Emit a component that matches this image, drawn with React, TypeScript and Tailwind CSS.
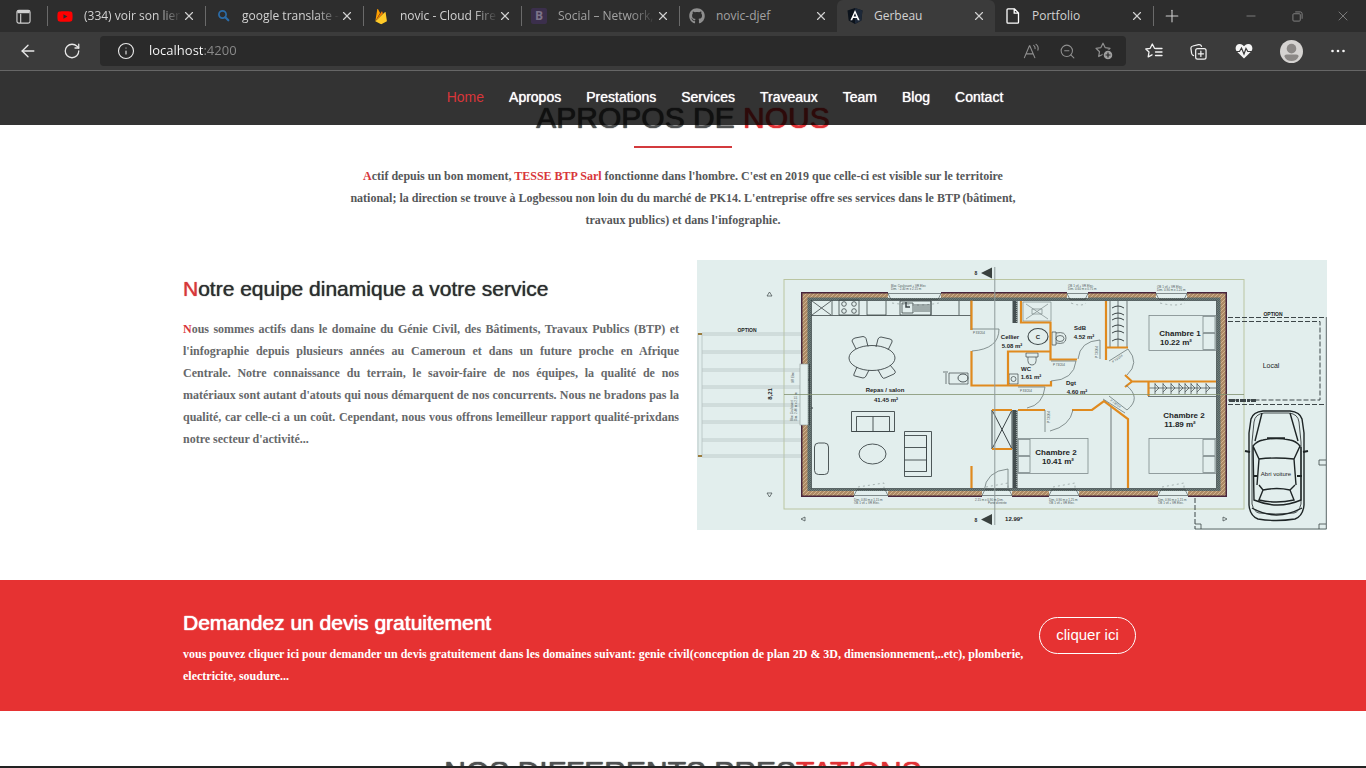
import type { ReactNode } from "react";
import { X, Plus, ArrowLeft, RotateCw, Info, ZoomOut, Minus } from "lucide-react";
import { FaGithub, FaYoutube } from "react-icons/fa";

const chromeFont = "font-['Open_Sans','Noto_Sans',sans-serif]";
const sansFont = "font-['Liberation_Sans',Arial,sans-serif]";
const serifFont = "font-['Liberation_Serif',serif]";

function FirebaseIcon() {
  return (
    <svg viewBox="0 0 16 18" className="h-[17px] w-4">
      <path d="M2 14 4 1.5c.1-.5.7-.6.9-.2L7 5.200z" fill="#ffa000" />
      <path d="M2 14 8.500 4c.2-.4.7-.4.9 0L10 6z" fill="#f57c00" />
      <path d="m2 14 10-9.500c.4-.3.800-.1.900.300L14.300 14l-5.500 3c-.4.2-.8.2-1.200 0z" fill="#ffca28" />
    </svg>
  );
}

function AngularIcon() {
  return (
    <svg viewBox="0 0 16 16" className="size-4">
      <path d="M8 0 15.500 2.600 14.300 12.500 8 16 1.700 12.500.5 2.600z" fill="#0c131c" />
      <path d="M8 0 15.500 2.600 14.300 12.500 8 16z" fill="#1d2838" />
      <path d="M8 2 3.400 12.300h1.800l.9-2.300h3.800l.9 2.300h1.800zm0 3.300L9.300 8.500H6.700z" fill="#fff" />
    </svg>
  );
}

function PageIcon() {
  return (
    <svg viewBox="0 0 14 16" className="h-4 w-[14px]" fill="none" stroke="#fff" strokeWidth="1.3">
      <path d="M1 1.800c0-.6.4-1 1-1h6.500L12.500 5v9.200c0 .6-.4 1-1 1H2c-.6 0-1-.4-1-1zM8.200 1v4.200h4.200" />
    </svg>
  );
}

function SearchIcon() {
  return (
    <svg viewBox="0 0 16 16" className="size-4" fill="none" stroke="#2b6ca8" strokeLinecap="round">
      <circle cx="7.500" cy="6.500" r="3.600" strokeWidth="1.700" />
      <path d="m10.300 9.300 3 3" strokeWidth="2.200" />
    </svg>
  );
}

type Tab = { title: string; icon: ReactNode; active?: boolean; bar?: boolean; dim?: boolean; fade?: boolean };

const tabs: Tab[] = [
  { title: "(334) voir son lier", icon: <FaYoutube className="size-[17px] text-[#f00]" />, bar: true, fade: true },
  { title: "google translate -", icon: <SearchIcon />, bar: true, fade: true },
  { title: "novic - Cloud Fire", icon: <FirebaseIcon />, bar: true, fade: true },
  {
    title: "Social – Network,",
    icon: <span className="flex size-4 items-center justify-center rounded-xs bg-[#3b2f4c] text-xs font-bold text-[#7d7489]">B</span>,
    bar: true,
    dim: true,
    fade: true,
  },
  { title: "novic-djef", icon: <FaGithub className="size-4 text-[#8f8f8f]" />, bar: true, dim: true },
  { title: "Gerbeau", icon: <AngularIcon />, active: true },
  { title: "Portfolio", icon: <PageIcon /> },
];

function TabStrip() {
  return (
    <div className="flex h-8 bg-[#2d2d2d] text-[#cfcfcf]">
      <button aria-label="Tab actions" className="flex w-[47px] items-center justify-center">
        <svg viewBox="0 0 16 16" className="size-[15px]" fill="none" stroke="#d0d0d0" strokeWidth="1.200">
          <rect x="1" y="1.500" width="14" height="13.500" rx="2" />
          <path d="M5 5v10" />
          <path d="M1.500 3h13" strokeWidth="3" />
        </svg>
      </button>
      {tabs.map((t) => (
        <div
          key={t.title}
          className={`relative flex w-[158px] shrink items-center pr-[9px] pl-[10px] ${t.active ? "rounded-t-md bg-[#3b3b3b]" : ""}`}
        >
          {t.bar && <span className="absolute top-[6px] left-0 h-5 w-px bg-[#6a6a6a]" />}
          <span className="flex w-4 shrink-0 justify-center">{t.icon}</span>
          <span
            className={`ml-[11px] min-w-0 flex-1 text-xs whitespace-nowrap ${t.fade ? "[mask-image:linear-gradient(to_right,black_75%,transparent)]" : ""} ${t.dim ? "text-[#a2a2a2]" : "text-[#d2d2d2]"}`}
          >
            {t.title}
          </span>
          <button aria-label={`Close ${t.title}`} className="shrink-0">
            <X className="size-[14px]" strokeWidth={2} />
          </button>
        </div>
      ))}
      <button aria-label="New tab" className="flex items-center">
        <span className="h-5 w-px bg-[#6a6a6a]" />
        <Plus className="ml-2 size-5" strokeWidth={1.300} />
      </button>
      <div className="ml-auto flex text-[#858585]">
        <button aria-label="Minimize" className="flex w-[46px] items-center justify-center">
          <Minus className="size-[14px]" strokeWidth={1.500} />
        </button>
        <button aria-label="Restore" className="flex w-[46px] items-center justify-center">
          <svg viewBox="0 0 12 12" className="size-[11px]" fill="none" stroke="currentColor">
            <rect x="1" y="3" width="8" height="8" rx="1" />
            <path d="M3.500 1H9q2 0 2 2v5.500" />
          </svg>
        </button>
        <button aria-label="Close window" className="flex w-[46px] items-center justify-center">
          <X className="size-4" strokeWidth={1.300} />
        </button>
      </div>
    </div>
  );
}

const starPath = "M8 1.200 10.100 5.600l4.900.7-3.500 3.400.8 4.800L8 12.200l-4.300 2.300.8-4.800L1 6.300l4.900-.7z";

function Toolbar() {
  return (
    <div className="flex h-[39px] items-center border-b border-[#666] bg-[#3b3b3b] text-[#e8e8e8]">
      <div className="flex w-[100px] shrink-0 items-center gap-[25px] pl-[18px]">
        <button aria-label="Back">
          <ArrowLeft className="size-5" strokeWidth={1.600} />
        </button>
        <button aria-label="Refresh">
          <RotateCw className="size-[18px]" strokeWidth={1.700} />
        </button>
      </div>
      <div className="flex h-[30px] min-w-0 flex-1 items-center rounded-sm bg-[#2a2a2a] pr-[13px] pl-[17px]">
        <Info className="size-[18px]" strokeWidth={1.500} />
        <input
          aria-label="Address"
          defaultValue="localhost:4200"
          className="ml-[14px] min-w-0 flex-1 bg-[linear-gradient(to_right,white_54px,#8b8b8b_54px)] bg-clip-text text-[13px] text-transparent outline-none"
        />
        <div className="flex items-center gap-[19px] text-[#8f8f8f]">
          <button aria-label="Read aloud">
            <svg viewBox="0 0 18 18" className="size-[17px]" fill="none" stroke="currentColor" strokeWidth="1.200" strokeLinecap="round">
              <path d="M1.500 15.500 6.800 3h.4l5.300 12.500M3.500 11.500h7M11.300 2.500c1.200.8 1.700 2 1.500 3.500M13.800 1.500c2 1.500 2.700 3.500 2 6" />
            </svg>
          </button>
          <button aria-label="Zoom">
            <ZoomOut className="size-[17px]" strokeWidth={1.500} />
          </button>
          <button aria-label="Add to favourites">
            <svg viewBox="0 0 18 18" className="size-[18px]" fill="none" stroke="currentColor" strokeWidth="1.200" strokeLinejoin="round">
              <path d={starPath} />
              <circle cx="13" cy="13" r="4.900" fill="#a0a0a0" stroke="#2a2a2a" />
              <path d="M13 10.500v5M10.500 13h5" stroke="#2a2a2a" />
            </svg>
          </button>
        </div>
      </div>
      <div className="flex w-60 shrink-0 items-center justify-between pr-5 pl-[19px]">
        <button aria-label="Favourites">
          <svg viewBox="0 0 18 16" className="h-4 w-[18px]" fill="none" stroke="#f2f2f2" strokeWidth="1.300" strokeLinejoin="round" strokeLinecap="round">
            <path d="M9.500 5.300 7.300 1 5.200 5.300.8 6l3.200 3-.8 4.800 3.800-2M10.500 5.500H17M10.500 9H17M10.500 12.500H17" />
          </svg>
        </button>
        <button aria-label="Collections">
          <svg viewBox="0 0 18 18" className="size-[17px]" fill="none" stroke="#f2f2f2" strokeWidth="1.300" strokeLinecap="round">
            <rect x="6" y="6" width="11" height="11" rx="2" />
            <path d="M11.500 8.700v5.600M8.700 11.500h5.600M3.800 13.300C2.500 13 2 12 1.700 11L1 6c-.2-1.500.5-2.500 2-2.800l6-1.500c1.500-.3 2.700.3 3.200 1.800" />
          </svg>
        </button>
        <button aria-label="Performance">
          <svg viewBox="0 0 18 16" className="h-4 w-[18px]">
            <path d="M9 15.500 1.800 8.500C-.5 6 .5 1 4.800 1 6.800 1 8 2 9 3.300 10 2 11.200 1 13.200 1c4.300 0 5.300 5 3 7.500z" fill="#f5f5f5" />
            <path d="M0 8.500h4.500L6.500 5 9 11l2-5.500 1.800 3H18" fill="none" stroke="#3b3b3b" strokeWidth="1.200" />
          </svg>
        </button>
        <button aria-label="Profile">
          <svg viewBox="0 0 24 24" className="size-[23px]">
            <circle cx="12" cy="12" r="12" fill="#d5d3d1" />
            <circle cx="12" cy="9" r="5" fill="#8b8886" />
            <path d="M4.500 17q0-2 2.500-2h10q2.500 0 2.500 2c-1.500 3.500-4 5-7.500 5s-6-1.500-7.500-5z" fill="#8b8886" />
          </svg>
        </button>
        <button aria-label="More">
          <svg viewBox="0 0 16 4" className="h-1 w-4" fill="#f5f5f5">
            <circle cx="2.500" cy="2" r="1.300" />
            <circle cx="8" cy="2" r="1.300" />
            <circle cx="13.500" cy="2" r="1.300" />
          </svg>
        </button>
      </div>
    </div>
  );
}

const links = ["Home", "Apropos", "Prestations", "Services", "Traveaux", "Team", "Blog", "Contact"];

function SiteNav() {
  return (
    <nav className={`absolute inset-x-0 top-0 flex h-[54px] items-center justify-center gap-[25px] bg-black/80 pb-[2px] pl-[84px] text-sm ${sansFont}`}>
      {links.map((l, i) => (
        <a key={l} href={`#${l.toLowerCase()}`} className={i === 0 ? "text-[#d8363a]" : "text-white [text-shadow:0_0_1px_white]"}>
          {l}
        </a>
      ))}
    </nav>
  );
}

const BG = "#e2eeed";
const INK = "#3d4648";
const ORANGE = "#e08a1e";

/* Plan coordinates: x 697–1327, y 260–530 */
function Bed({ x, y, right, w = 67 }: { x: number; y: number; right?: boolean; w?: number }) {
  const px = right ? x + w - 13 : x;
  return (
    <g fill="none" stroke="#7d898a" strokeWidth="0.800">
      <rect x={x} y={y} width={w} height="35" />
      <rect x={px} y={y + 1} width="12" height="16" />
      <rect x={px} y={y + 18} width="12" height="16" />
    </g>
  );
}

function FloorPlan() {
  const topWindows = [[888, 53], [1067, 21], [1156, 31]];
  const bottomWindows = [[854, 34], [982, 30], [1049, 30], [1158, 30]];
  return (
    <svg viewBox="697 260 630 270" className="block w-full" role="img" aria-label="Plan de maison" fontFamily="Liberation Sans" fill="none">
      <defs>
        <pattern id="brick" width="4" height="4" patternUnits="userSpaceOnUse">
          <rect width="4" height="4" fill="#ad8a66" />
          <path d="M0 4 4 0" stroke="#d0b48e" strokeWidth="1" />
        </pattern>
        <pattern id="hatch" width="2" height="2" patternUnits="userSpaceOnUse">
          <rect width="2" height="2" fill="#53615f" />
          <path d="M0 2 2 0" stroke="#8a9796" strokeWidth="0.500" />
        </pattern>
      </defs>
      <rect x="697" y="260" width="630" height="270" fill={BG} />
      <rect x="784" y="279.500" width="460" height="229.500" stroke="#bac5a2" />

      {/* pergola */}
      <g stroke="#b6c1c1" strokeWidth="0.800">
        {[333, 351, 369, 386, 404, 421, 439, 455].map((y) => (
          <path key={y} d={`M702 ${y}H801M702 ${y + 2}H801`} />
        ))}
        <path d="M698 333V457M702 333V457" />
      </g>
      <path d="M698 334h4M698 456h4" stroke="#9a7b3d" strokeWidth="2" />

      {/* outer walls */}
      <rect x="801" y="292" width="426" height="205" fill="#47253c" />
      <rect x="802.500" y="293.500" width="423" height="202" fill="url(#brick)" />
      <rect x="807.500" y="297.500" width="413" height="193.500" fill="url(#hatch)" />
      <rect x="811.500" y="300.500" width="405" height="188" fill={BG} stroke="#2d3637" strokeWidth="0.600" />
      {topWindows.map(([x, w]) => (
        <g key={x}>
          <rect x={x} y="291" width={w} height="7" fill={BG} />
          <path d={`M${x} 293.500h${w}l-3 6h${6 - w}z`} stroke={INK} strokeWidth="0.600" />
          <path d={`M${x + 4} 303q${w / 2} 4 ${w - 6} 0`} stroke="#7d898a" strokeWidth="0.600" strokeDasharray="2 3" />
        </g>
      ))}
      {bottomWindows.map(([x, w]) => (
        <g key={x}>
          <rect x={x} y="491" width={w} height="7" fill={BG} />
          <path d={`M${x} 495.500h${w}l-3-6h${6 - w}z`} stroke={INK} strokeWidth="0.600" />
          <path d={`M${x + 4} 487l${w - 8}-4v5`} stroke="#7d898a" strokeWidth="0.600" strokeDasharray="2 3" />
        </g>
      ))}
      <rect x="800" y="364" width="8" height="61" fill={BG} stroke="#8a9696" strokeWidth="0.600" />
      <path d="M809.500 364V425M808 380h2M811 408h2" stroke={INK} />

      {/* kitchen */}
      <g stroke={INK} strokeWidth="0.800">
        <path d="M811 315.500H971M812 301l19 14M831 301l-19 14M832 300v15M867 301v14h19v-14M839 300h20v15h-20zM900 301h31v14h-31zM902 303h11v10h-11zM914 305h16M914 307h16M914 309h16M914 311h16M931 301v14M959 301v14" />
        {[[844, 304], [854, 304], [844, 311], [854, 311]].map(([x, y]) => (
          <circle key={`${x}-${y}`} cx={x} cy={y} r="2.300" />
        ))}
        <path d="M906 302v5h4" strokeWidth="1.500" />
      </g>

      {/* furniture of the living room */}
      <g stroke={INK} strokeWidth="0.900">
        <ellipse cx="872" cy="358" rx="23" ry="12.500" />
        <path d="m856 349-4-8q0-2 3-3l8-1.500q2 0 3 2l2 8M876 347l2-8q1-2 3-2l9 2q3 1 2 3l-4 8M857 367l-3 7q-1 2 1 2l8 2q2 0 3-2l3-6M878 370l4 7q1 2 3 1l9-4q2-1 1-3l-5-6" />
        <path d="M851.500 411.500h43v20h-43zM856.500 431.500v-15h33v15M873 416.500v15M851.500 431.500h43" />
        <path d="M904.500 431.500h27v45h-27zM904.500 435.500h22v36h-22M926.500 435.500v36M904.500 447.500h22M904.500 460h22" />
        <ellipse cx="872.500" cy="454" rx="13.500" ry="10" />
        <rect x="814.500" y="443" width="14" height="31.500" rx="4" />
        <path d="M949 373h19v11h-19zM946 373v11M943 372h5" strokeWidth="0.700" />
        <ellipse cx="963" cy="378" rx="5" ry="4" />
      </g>

      {/* bathrooms and closets */}
      <g stroke={INK} strokeWidth="0.700">
        <path d="M1023 302h28v19h-28zM1026 304l22 15M1048 304l-22 15M1032 309h10v5h-10z" stroke="#7d898a" />
        <ellipse cx="1038" cy="336.500" rx="10" ry="8" strokeWidth="1.100" />
        <path d="M1052 332v13h4v-13zM1056 333q10-2 10 5t-10 5" />
        <ellipse cx="1060" cy="338.500" rx="4" ry="3" />
        <path d="M1026 353h12v4h-12zM1028 357q-1 8 4 8t4-8M1009 374h9v10h-9z" />
        <circle cx="1013.500" cy="379" r="2.500" />
        <path d="M992 410h20v39h-20zM992 410l20 39M1012 410l-20 39" strokeWidth="1" />
        <path d="M1110 301v46M1127 301v46M1118 301v46M1111 406v82M1148 396.500h68M1148 388h68M971 300v30" />
        {[306, 313, 318, 325, 331, 339].map((y) => (
          <path key={y} d={`M1112 ${y + 2}q6-4 12 0`} strokeWidth="1" />
        ))}
        {[1155, 1163, 1171, 1179, 1185, 1191, 1197, 1206].map((x) => (
          <path key={x} d={`M${x} 383v11M${x} 384l4 4-4 4`} />
        ))}
      </g>
      <path d="M1015 301V323M1015 410V488" stroke="#454f50" strokeWidth="5" />
      <path d="M1017 301V323M1017 410V488" stroke="#9ba6a5" strokeWidth="2" strokeDasharray="1 1" />

      {/* partitions */}
      <path
        d="M971.500 300.500V330M971.500 351V385.500H1051V381M1008 385.500V351.500H1051M1021 301V322.500H1050.500V359.500H1077M1106 301V360M1106 347.500H1128M992 410H1012M992 449H1012M1018 410H1045M1072 410H1092L1104 401 1128 419V488M971.500 466V488M1125 375l7 6.500H1216M1125 387l7-5.500M1148.500 381.500V396"
        stroke={ORANGE}
        strokeWidth="2.200"
      />

      {/* doors */}
      <g stroke="#6c7879" strokeWidth="0.800">
        <path d="M972 329h27q0 20-27 22M1008 489v-20q-22 2-24 22M1051 361h25q-2 19-25 20M1018 387h27q-2 18-18 21M1045 410v22M1050 431q20-5 23-21M1078 359q2-18 22-19v19M1109 361l19-12M1128 349q12 14-1 26M1109 396l18 14M1127 410q15-12-1-25M1103 399l22 14" />
      </g>

      <Bed x={1018} y={438.500} w={70} />
      <Bed x={1149} y={315.500} right />
      <Bed x={1149} y={438.500} right />

      {/* axes */}
      <path d="M784 394.500H1244" stroke="#81906f" strokeWidth="0.800" />
      <path d="M994.800 267V525" stroke="#8f9a9b" />
      <path d="m981 273 11-5.500v11zM981 519.500l11-5.500v11z" fill="#39413f" />
      <path d="m767 296 5 0-2.500-4zM767 493h5l-2.500 4zM805 517l-4 2 4 2zM1223 517l4 2-4 2z" stroke={INK} strokeWidth="0.700" />

      {/* garage */}
      <g stroke={INK} strokeDasharray="5 2">
        <path d="M1228 317.500H1326M1228 321.500H1320V400H1228M1228 404.500H1326M1195 498V529" />
      </g>
      <path d="M1326.300 317V529H1195M1195 524h6v5M1326 524h-7v5M1326 460h-7v5h7" stroke={INK} strokeWidth="0.800" />
      <path d="M1229 400.500h27" stroke={INK} strokeWidth="3" strokeDasharray="6 1 3 1" />

      {/* car */}
      <g stroke="#1e2526" strokeWidth="1.400">
        <path d="M1251 419q2-7 12-8h27q10 1 12 8l2 14v72q-1 11-9 14-19 3-37 0-8-3-9-14v-72z" />
        <path d="M1254 422q1-8 10-9h25q9 1 10 9l2 20v62q-2 8-7 9-19 2-35 0-5-1-7-9v-62z" strokeWidth="0.800" />
        <path d="M1262 413l-7 28M1290 413l8 28M1253 446q4-5 10-6 13-3 27 0 6 1 10 6l-6 13q-18-2-35 0zM1259 459l-2 26M1294 459l2 26M1263 490q14-3 27 0l4 10q-18 4-35 0zM1259 485l4 5M1295 485l-5 5M1253 447l1 53q24 10 47 0V447M1267 438h18" />
        <path d="M1250 452l-5-1M1303 452l5-1M1254 476h3M1297 476h5" strokeWidth="2" />
        <path d="M1252 508q24 14 50 0" />
      </g>

      {/* room names */}
      <g fill="#1d2425" fontSize="8" fontWeight="bold" textAnchor="middle">
        <text x="885" y="392" fontSize="6">Repas / salon</text>
        <text x="886" y="402" fontSize="6">41.45 m²</text>
        <text x="1010" y="339" fontSize="6">Cellier</text>
        <text x="1012" y="348" fontSize="6">5.08 m²</text>
        <text x="1080" y="330" fontSize="6">SdB</text>
        <text x="1084" y="339" fontSize="6">4.52 m²</text>
        <text x="1026" y="371" fontSize="6">WC</text>
        <text x="1031" y="379" fontSize="6">1.61 m²</text>
        <text x="1071" y="385" fontSize="6">Dgt</text>
        <text x="1077" y="394" fontSize="6">4.60 m²</text>
        <text x="1180" y="336">Chambre 1</text>
        <text x="1176" y="345">10.22 m²</text>
        <text x="1184" y="418">Chambre 2</text>
        <text x="1180" y="427">11.89 m²</text>
        <text x="1056" y="455">Chambre 2</text>
        <text x="1058" y="464">10.41 m²</text>
        <text x="1038" y="339" fontSize="6">C</text>
        <text x="747" y="332" fontSize="5">OPTION</text>
        <text x="1273" y="316" fontSize="5">OPTION</text>
        <text x="1014" y="521" fontSize="6">12.99⁶</text>
        <text x="976" y="275" fontSize="5">8</text>
        <text x="976" y="522" fontSize="5">8</text>
        <text x="1271" y="368" fontSize="7" fontWeight="normal">Local</text>
        <text x="1276" y="476" fontSize="6" fontWeight="normal">Abri voiture</text>
        <text transform="translate(772 394) rotate(-90)" fontSize="6">8,21</text>
      </g>
      <g fill="#4b5658" fontSize="3">
        <text x="891" y="287">Bloc Coulissant + VR Elec</text>
        <text x="891" y="290">Dim. : 2.40 m x 2.15 m</text>
        <text x="1068" y="287">OB 1 vtl + VR Elec.</text>
        <text x="1068" y="290">Dim. 0.60 m x 0.75 m</text>
        <text x="1157" y="288">OB 1 vtl + VR Elec.</text>
        <text x="1157" y="291">Dim. 0.90 m x 1.25 m</text>
        <text x="854" y="501">Dim. 0.80 m x 1.15 m</text>
        <text x="854" y="504">OB 1 vtl + VR Elec.</text>
        <text x="975" y="501">2.15 m x 0.90 m Dim.</text>
        <text x="988" y="504">Porte d'entrée</text>
        <text x="1049" y="501">Dim. 0.90 m x 1.25 m</text>
        <text x="1049" y="504">OB 1 vtl + VR Elec.</text>
        <text x="1158" y="501">Dim. 0.90 m x 1.15 m</text>
        <text x="1158" y="504">OB 1 vtl + VR Elec.</text>
        <text x="973" y="334">P 83/204</text>
        <text x="1053" y="366">P 73/204</text>
        <text x="1020" y="392">P 83/204</text>
        <text transform="translate(794 383) rotate(-90)">VR Elec</text>
        <text transform="translate(793 421) rotate(-90)">Bloc Coulissant</text>
        <text transform="translate(797 421) rotate(-90)">Dim. 2.40 m x 2.15 m</text>
        <text transform="translate(1050 423) rotate(-90)">P 73/204</text>
        <text transform="translate(1098 358) rotate(-90)">P 73/204</text>
        <text transform="translate(1113 363) rotate(-35)">P 73/204</text>
        <text transform="translate(1110 401) rotate(35)">P 73/204</text>
      </g>
    </svg>
  );
}

function SectionTitle({ lead, accent }: { lead: string; accent: string }) {
  return (
    <h2 className={`text-center text-[30px] leading-[38px] text-[#505253] [text-shadow:0_0_1px_currentColor,0_0_1px_currentColor] ${sansFont}`}>
      {lead}
      <span className="text-[#e03236]">{accent}</span>
    </h2>
  );
}

export default function App() {
  return (
    <div className="flex h-screen flex-col overflow-hidden border-b-2 border-[#222] bg-white">
      <header className={chromeFont}>
        <TabStrip />
        <Toolbar />
      </header>
      <div className="relative min-h-0 flex-1 overflow-hidden">
        <main>
          <section className="pt-7">
            <SectionTitle lead="APROPOS DE " accent="NOUS" />
            <div className="mx-auto mt-[9px] h-[2px] w-[98px] bg-[#d33a3d]" />
            <p className={`mx-auto mt-[17px] w-[670px] text-center text-xs leading-[22px] font-bold text-[#555759] ${serifFont}`}>
              <span className="text-[#d8363a]">A</span>ctif depuis un bon moment, <span className="text-[#d8363a]">TESSE BTP Sarl</span> fonctionne
              dans l'hombre. C'est en 2019 que celle-ci est visible sur le territoire
              <br />
              national; la direction se trouve à Logbessou non loin du du marché de PK14. L'entreprise offre ses services dans le BTP (bâtiment,
              travaux publics) et dans l'infographie.
            </p>
            <div className="mt-[29px] grid grid-cols-[496fr_630fr] gap-[18px] pr-[39px] pl-[183px]">
              <div className="pt-4">
                <h3 className={`text-[21px] leading-[26px] text-[#2c2e2f] [text-shadow:0_0_1px_currentColor] ${sansFont}`}>
                  <span className="text-[#d8363a]">N</span>otre equipe dinamique a votre service
                </h3>
                <p className={`mt-4 text-justify text-xs leading-[22px] font-bold text-[#66686a] ${serifFont}`}>
                  <span className="text-[#d8363a]">N</span>ous sommes actifs dans le domaine du Génie Civil, des Bâtiments, Travaux Publics (BTP)
                  et l'infographie depuis plusieurs années au Cameroun et dans un future proche en Afrique Centrale. Notre connaissance du
                  terrain, le savoir-faire de nos équipes, la qualité de nos matériaux sont autant d'atouts qui nous démarquent de nos
                  concurrents. Nous ne bradons pas la qualité, car celle-ci a un coût. Cependant, nous vous offrons lemeilleur rapport
                  qualité-prixdans notre secteur d'activité...
                </p>
              </div>
              <FloorPlan />
            </div>
          </section>
          <section className="mt-[50px] flex h-[131px] items-start gap-2 bg-[#e63232] pr-[230px] pl-[183px] text-white">
            <div className="flex-1 pt-[30px]">
              <h3 className={`text-[21px] leading-[26px] [text-shadow:0_0_1px_white,0_0_1px_white] ${sansFont}`}>Demandez un devis gratuitement</h3>
              <p className={`mt-[7px] text-xs leading-[22px] font-bold ${serifFont}`}>
                vous pouvez cliquer ici pour demander un devis gratuitement dans les domaines suivant: genie civil(conception de plan 2D &amp; 3D,
                dimensionnement,..etc), plomberie, electricite, soudure...
              </p>
            </div>
            <button className={`mt-[37px] h-[37px] w-[97px] rounded-full border border-white text-[15px] whitespace-nowrap ${sansFont}`}>
              cliquer ici
            </button>
          </section>
          <section className="pt-[42px]">
            <SectionTitle lead="NOS DIFFERENTS PRES" accent="TATIONS" />
          </section>
        </main>
        <SiteNav />
      </div>
    </div>
  );
}
